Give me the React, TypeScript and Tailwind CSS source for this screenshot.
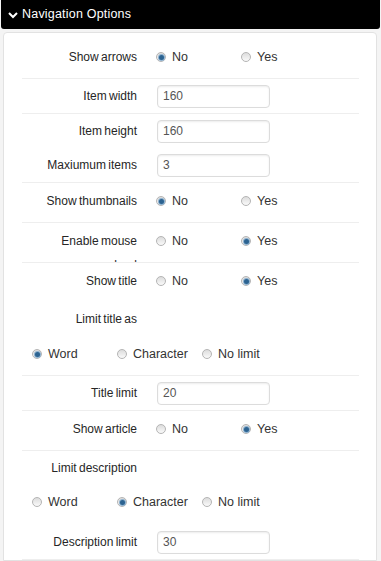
import { ReactNode } from 'react'

type Opt = { label: string; checked?: boolean }

function Radio({ checked }: { checked?: boolean }) {
  return (
    <span className="w-[10px] h-[10px] shrink-0 rounded-full border border-[#b4b4b4] bg-gradient-to-b from-[#dcdcdc] to-[#fafafa] flex items-center justify-center">
      {checked && <span className="w-[5px] h-[5px] rounded-full bg-[#2c6391] shadow-[0_0_0_1px_#8db1cf]" />}
    </span>
  )
}

function Options({ opts }: { opts: Opt[] }) {
  return (
    <div className="flex">
      {opts.map((o) => (
        <label key={o.label} className="w-[85px] flex items-center gap-[6px] text-[12.5px] text-[#333] leading-[24px]">
          <Radio checked={o.checked} />
          <span>{o.label}</span>
        </label>
      ))}
    </div>
  )
}

function Label({ children }: { children: ReactNode }) {
  return (
    <div className="w-[115px] shrink-0 pl-[19px] text-right text-[12px] text-[#262626] leading-[24px] [word-spacing:-1px]">
      {children}
    </div>
  )
}

function RadioRow({ label, yes, border = true }: { label: string; yes?: boolean; border?: boolean }) {
  return (
    <div className={`h-[40px] overflow-hidden flex items-start gap-[19px] pt-[6px] ${border ? 'border-b border-[#eeeeee]' : ''}`}>
      <Label>{label}</Label>
      <Options opts={[{ label: 'No', checked: !yes }, { label: 'Yes', checked: yes }]} />
    </div>
  )
}

function InputRow({ label, value, border = true }: { label: string; value: string; border?: boolean }) {
  return (
    <div className={`h-[34px] box-content flex items-center gap-[20px] ${border ? 'border-b border-[#eeeeee]' : ''}`}>
      <Label>{label}</Label>
      <div className="w-[113px] h-[23px] rounded-[4px] border border-[#dcdcdc] bg-white shadow-[inset_0_1px_2px_rgba(0,0,0,0.08)] flex items-center pl-[5px] text-[12px] text-[#555]">
        {value}
      </div>
    </div>
  )
}

function LimitGroup({ label, checked, pt, gap, pb, border }: { label: string; checked: number; pt: string; gap: string; pb: string; border?: boolean }) {
  const names = ['Word', 'Character', 'No limit']
  return (
    <div className={`${pt} ${pb} ${border ? 'border-b border-[#eeeeee]' : ''}`}>
      <Label>{label}</Label>
      <div className={`${gap} pl-[10px]`}>
        <Options opts={names.map((n, i) => ({ label: n, checked: i === checked }))} />
      </div>
    </div>
  )
}

export default function App() {
  return (
    <div className="w-[381px] h-[561px] overflow-hidden bg-[#f4f4f4] font-['Liberation_Sans',Arial,sans-serif]">
      <div className="mx-[1px] h-[29px] bg-black rounded-b-[3px] flex items-center gap-[4px] pl-[7px] text-white text-[12.5px] tracking-[0.2px]">
        <svg width="10" height="8" viewBox="0 0 10 8" className="mt-[1px]">
          <path d="M1 2 L5 6 L9 2" fill="none" stroke="white" strokeWidth="2" />
        </svg>
        <span>Navigation Options</span>
      </div>
      <div className="mt-[3px] mx-[3px] w-[374px] bg-white border border-[#e2e2e2] rounded-t-[4px] pt-[6px]">
        <div className="ml-[18px] mr-[17px]">
          <RadioRow label="Show arrows" />
          <InputRow label="Item width" value="160" />
          <InputRow label="Item height" value="160" border={false} />
          <InputRow label="Maxiumum items" value="3" />
          <RadioRow label="Show thumbnails" />
          <RadioRow label="Enable mouse wheel" yes />
          <RadioRow label="Show title" yes border={false} />
          <LimitGroup label="Limit title as" checked={0} pt="pt-[4px]" gap="mt-[11px]" pb="pb-[9px]" border />
          <InputRow label="Title limit" value="20" />
          <RadioRow label="Show article" yes />
          <LimitGroup label="Limit description" checked={1} pt="pt-[5px]" gap="mt-[10px]" pb="pb-[11px]" />
          <InputRow label="Description limit" value="30" />
        </div>
      </div>
    </div>
  )
}
